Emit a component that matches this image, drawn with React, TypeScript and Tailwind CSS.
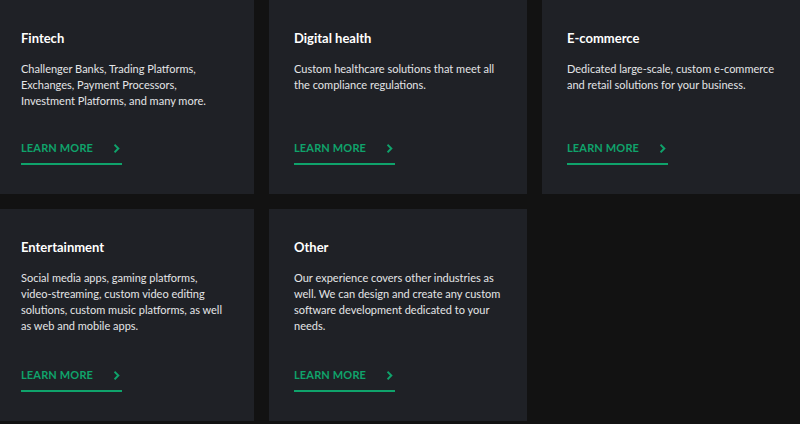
import React from 'react';

type Industry = {
  title: string;
  blurb: string;
};

const INDUSTRIES: Industry[] = [
  {
    title: 'Fintech',
    blurb: 'Challenger Banks, Trading Platforms, Exchanges, Payment Processors, Investment Platforms, and many more.',
  },
  {
    title: 'Digital health',
    blurb: 'Custom healthcare solutions that meet all the compliance regulations.',
  },
  {
    title: 'E-commerce',
    blurb: 'Dedicated large-scale, custom e-commerce and retail solutions for your business.',
  },
  {
    title: 'Entertainment',
    blurb: 'Social media apps, gaming platforms, video-streaming, custom video editing solutions, custom music platforms, as well as web and mobile apps.',
  },
  {
    title: 'Other',
    blurb: 'Our experience covers other industries as well. We can design and create any custom software development dedicated to your needs.',
  },
];

const Chevron: React.FC = () => (
  <svg width="6" height="9" viewBox="0 0 6 9" fill="none" className="mr-[2px]">
    <path d="M1.2 1.4 L4.3 4.5 L1.2 7.6" stroke="currentColor" strokeWidth="2" strokeLinecap="square" />
  </svg>
);

const IndustryCard: React.FC<{ item: Industry }> = ({ item }) => (
  <div className="flex flex-col bg-[#1f2126] pl-[25px] pr-[24px] pt-[29px] pb-[29px]">
    <h3 className="text-[13px] leading-[19px] font-bold text-white">{item.title}</h3>
    <p className="mt-[13px] text-[11px] leading-[16px] text-[#e4e5e7]">{item.blurb}</p>
    <a
      href="#"
      className="mt-auto w-[101px] flex items-center justify-between pb-[7px] border-b-2 border-[#0fa36b] text-[#0fa36b]"
    >
      <span className="text-[11px] leading-[16px] font-bold tracking-[0.15px]">LEARN MORE</span>
      <Chevron />
    </a>
  </div>
);

const App: React.FC = () => {
  return (
    <div
      className="w-[800px] h-[424px] overflow-hidden bg-[#121212]"
      style={{ fontFamily: 'Lato, "Open Sans", sans-serif' }}
    >
      <div className="ml-[-4px] grid grid-cols-[258px_258px_258px] grid-rows-[194px_212px] gap-[15px]">
        {INDUSTRIES.map((item) => (
          <IndustryCard key={item.title} item={item} />
        ))}
      </div>
    </div>
  );
};

export default App;
